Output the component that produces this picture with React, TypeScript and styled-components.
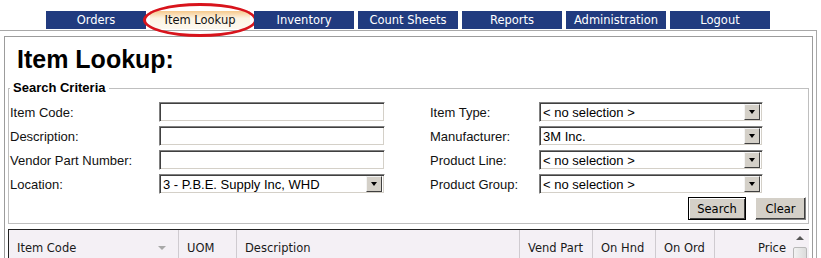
import React, { ReactElement } from 'react';
import styled, { createGlobalStyle } from 'styled-components';

const GlobalStyle = createGlobalStyle`
  html, body {
    margin: 0;
    padding: 0;
    background: #ffffff;
    overflow: hidden;
  }
  body {
    font-family: "Liberation Sans", Arial, sans-serif;
    color: #000000;
  }
`;

const Page = styled.div`
  width: 821px;
`;

const NavBar = styled.nav`
  display: flex;
  gap: 4px;
  margin: 11px 0 0 46px;
  height: 18px;
`;

const NavTab = styled.div<{ $active?: boolean }>`
  position: relative;
  width: 100px;
  height: 18px;
  display: flex;
  align-items: center;
  justify-content: center;
  font-family: "DejaVu Sans", Tahoma, sans-serif;
  font-size: 11.5px;
  color: ${(p) => (p.$active ? '#111111' : '#ffffff')};
  background: ${(p) => (p.$active ? 'linear-gradient(#f6c98c, #fcf3e2 40%, #fdf9f0)' : '#213b7f')};
`;

const Highlight = styled.span`
  position: absolute;
  left: -7px;
  top: -8px;
  width: 114px;
  height: 34px;
  box-sizing: border-box;
  border: 3.5px solid #d8141c;
  border-radius: 50%;
  pointer-events: none;
`;

const OuterFrame = styled.div`
  margin-top: 1px;
  width: 817px;
  height: 240px;
  box-sizing: border-box;
  border: 1px solid #a8a8a8;
  border-left: none;
  padding: 5px 3px 0 4px;
`;

const InnerBox = styled.div`
  height: 100%;
  box-sizing: border-box;
  border: 1px solid #9c9c9c;
  border-bottom: none;
`;

const Title = styled.h1`
  margin: 0 0 6px 0;
  padding: 7px 0 0 12px;
  font-size: 25px;
  line-height: 30px;
  font-weight: bold;
`;

const Criteria = styled.fieldset`
  margin: 0 3px;
  padding: 6px 0 3px 1px;
  border: 1px solid #bfbfbf;
`;

const Legend = styled.legend`
  margin-left: 0;
  padding: 0 3px;
  font-size: 13px;
  font-weight: bold;
  line-height: 16px;
`;

const Columns = styled.div`
  display: flex;
  gap: 45px;
`;

const FieldColumn = styled.div<{ $labelWidth: number; $controlWidth: number }>`
  display: grid;
  grid-template-columns: ${(p) => p.$labelWidth}px ${(p) => p.$controlWidth}px;
  grid-auto-rows: 20px;
  row-gap: 4px;
  align-items: center;
`;

const Label = styled.label`
  font-size: 13px;
  color: #111111;
`;

const TextBox = styled.div`
  height: 20px;
  box-sizing: border-box;
  background: #ffffff;
  border: 1px solid;
  border-color: #808080 #ffffff #ffffff #808080;
  box-shadow: inset 1px 1px 0 #404040, inset -1px -1px 0 #d4d0c8;
`;

const SelectBox = styled(TextBox)`
  display: flex;
  align-items: center;
  justify-content: space-between;
  padding: 0 2px 0 3px;
  font-size: 13px;
`;

const ArrowButton = styled.span`
  width: 16px;
  height: 16px;
  box-sizing: border-box;
  background: #d4d0c8;
  border: 1px solid;
  border-color: #f4f4f4 #404040 #404040 #f4f4f4;
  display: flex;
  align-items: center;
  justify-content: center;
  &::after {
    content: '';
    border-left: 3.5px solid transparent;
    border-right: 3.5px solid transparent;
    border-top: 4px solid #000000;
  }
`;

const ButtonRow = styled.div`
  display: flex;
  justify-content: flex-end;
  gap: 9px;
  margin: 3px 2px 0 0;
`;

const Button = styled.button<{ $default?: boolean }>`
  height: 23px;
  width: ${(p) => (p.$default ? 58 : 51)}px;
  padding: 0;
  font-family: "DejaVu Sans", Tahoma, sans-serif;
  font-size: 11.5px;
  color: #000000;
  background: #d4d0c8;
  border: 1px solid;
  border-color: ${(p) => (p.$default ? '#000000' : '#ffffff #808080 #808080 #ffffff')};
  box-shadow: ${(p) => (p.$default
    ? 'inset 1px 1px 0 #ffffff, inset -1px -1px 0 #404040'
    : 'inset -1px -1px 0 #404040')};
`;

const Grid = styled.div`
  margin: 5px 3px 0;
  border-top: 1px solid #222222;
  border-left: 1px solid #222222;
  background: #f4f0f5;
  display: grid;
  grid-template-columns: 170px 58px 283px 73px 63px 59px 1fr 18px;
  height: 32px;
`;

const HeadCell = styled.div<{ $right?: boolean; $last?: boolean }>`
  display: flex;
  align-items: center;
  justify-content: ${(p) => (p.$right ? 'flex-end' : 'space-between')};
  padding: 0 ${(p) => (p.$right ? 5 : 8)}px 1px 8px;
  border-right: ${(p) => (p.$last ? 'none' : '1px solid #cfcbd0')};
  font-family: "DejaVu Sans", Tahoma, sans-serif;
  font-size: 11.5px;
  color: #1a1a1a;
`;

const SortArrow = styled.span`
  margin-right: 4px;
  border-left: 4px solid transparent;
  border-right: 4px solid transparent;
  border-top: 4px solid #a8a8a8;
`;

const ScrollTrack = styled.div`
  display: flex;
  flex-direction: column;
  align-items: center;
  padding-top: 6px;
  gap: 7px;
`;

const ScrollUp = styled.span`
  border-left: 4px solid transparent;
  border-right: 4px solid transparent;
  border-bottom: 4px solid #555555;
`;

const ScrollThumb = styled.span`
  width: 14px;
  height: 20px;
  box-sizing: border-box;
  border: 1px solid #b8b8b8;
  border-radius: 2px;
  background: linear-gradient(90deg, #f2f2f2, #dcdcdc);
`;

const tabs = ['Orders', 'Item Lookup', 'Inventory', 'Count Sheets', 'Reports', 'Administration', 'Logout'];

const leftFields = ['Item Code:', 'Description:', 'Vendor Part Number:'];

const rightFields = [
  { label: 'Item Type:', value: '< no selection >' },
  { label: 'Manufacturer:', value: '3M Inc.' },
  { label: 'Product Line:', value: '< no selection >' },
  { label: 'Product Group:', value: '< no selection >' },
];

const columns = ['UOM', 'Description', 'Vend Part', 'On Hnd', 'On Ord'];

function App(): ReactElement {
  return (
    <Page>
      <GlobalStyle />
      <NavBar>
        {tabs.map((t) => (
          <NavTab key={t} $active={t === 'Item Lookup'}>
            {t}
            {t === 'Item Lookup' && <Highlight />}
          </NavTab>
        ))}
      </NavBar>
      <OuterFrame>
        <InnerBox>
          <Title>Item Lookup:</Title>
          <Criteria>
            <Legend>Search Criteria</Legend>
            <Columns>
              <FieldColumn $labelWidth={149} $controlWidth={226}>
                {leftFields.map((f) => (
                  <React.Fragment key={f}>
                    <Label>{f}</Label>
                    <TextBox />
                  </React.Fragment>
                ))}
                <Label>Location:</Label>
                <SelectBox>
                  3 - P.B.E. Supply Inc, WHD
                  <ArrowButton />
                </SelectBox>
              </FieldColumn>
              <FieldColumn $labelWidth={109} $controlWidth={224}>
                {rightFields.map((f) => (
                  <React.Fragment key={f.label}>
                    <Label>{f.label}</Label>
                    <SelectBox>
                      {f.value}
                      <ArrowButton />
                    </SelectBox>
                  </React.Fragment>
                ))}
              </FieldColumn>
            </Columns>
            <ButtonRow>
              <Button $default>Search</Button>
              <Button>Clear</Button>
            </ButtonRow>
          </Criteria>
          <Grid>
            <HeadCell>
              Item Code
              <SortArrow />
            </HeadCell>
            {columns.map((c) => (
              <HeadCell key={c}>{c}</HeadCell>
            ))}
            <HeadCell $right $last>Price</HeadCell>
            <ScrollTrack>
              <ScrollUp />
              <ScrollThumb />
            </ScrollTrack>
          </Grid>
        </InnerBox>
      </OuterFrame>
    </Page>
  );
}

export default App;
